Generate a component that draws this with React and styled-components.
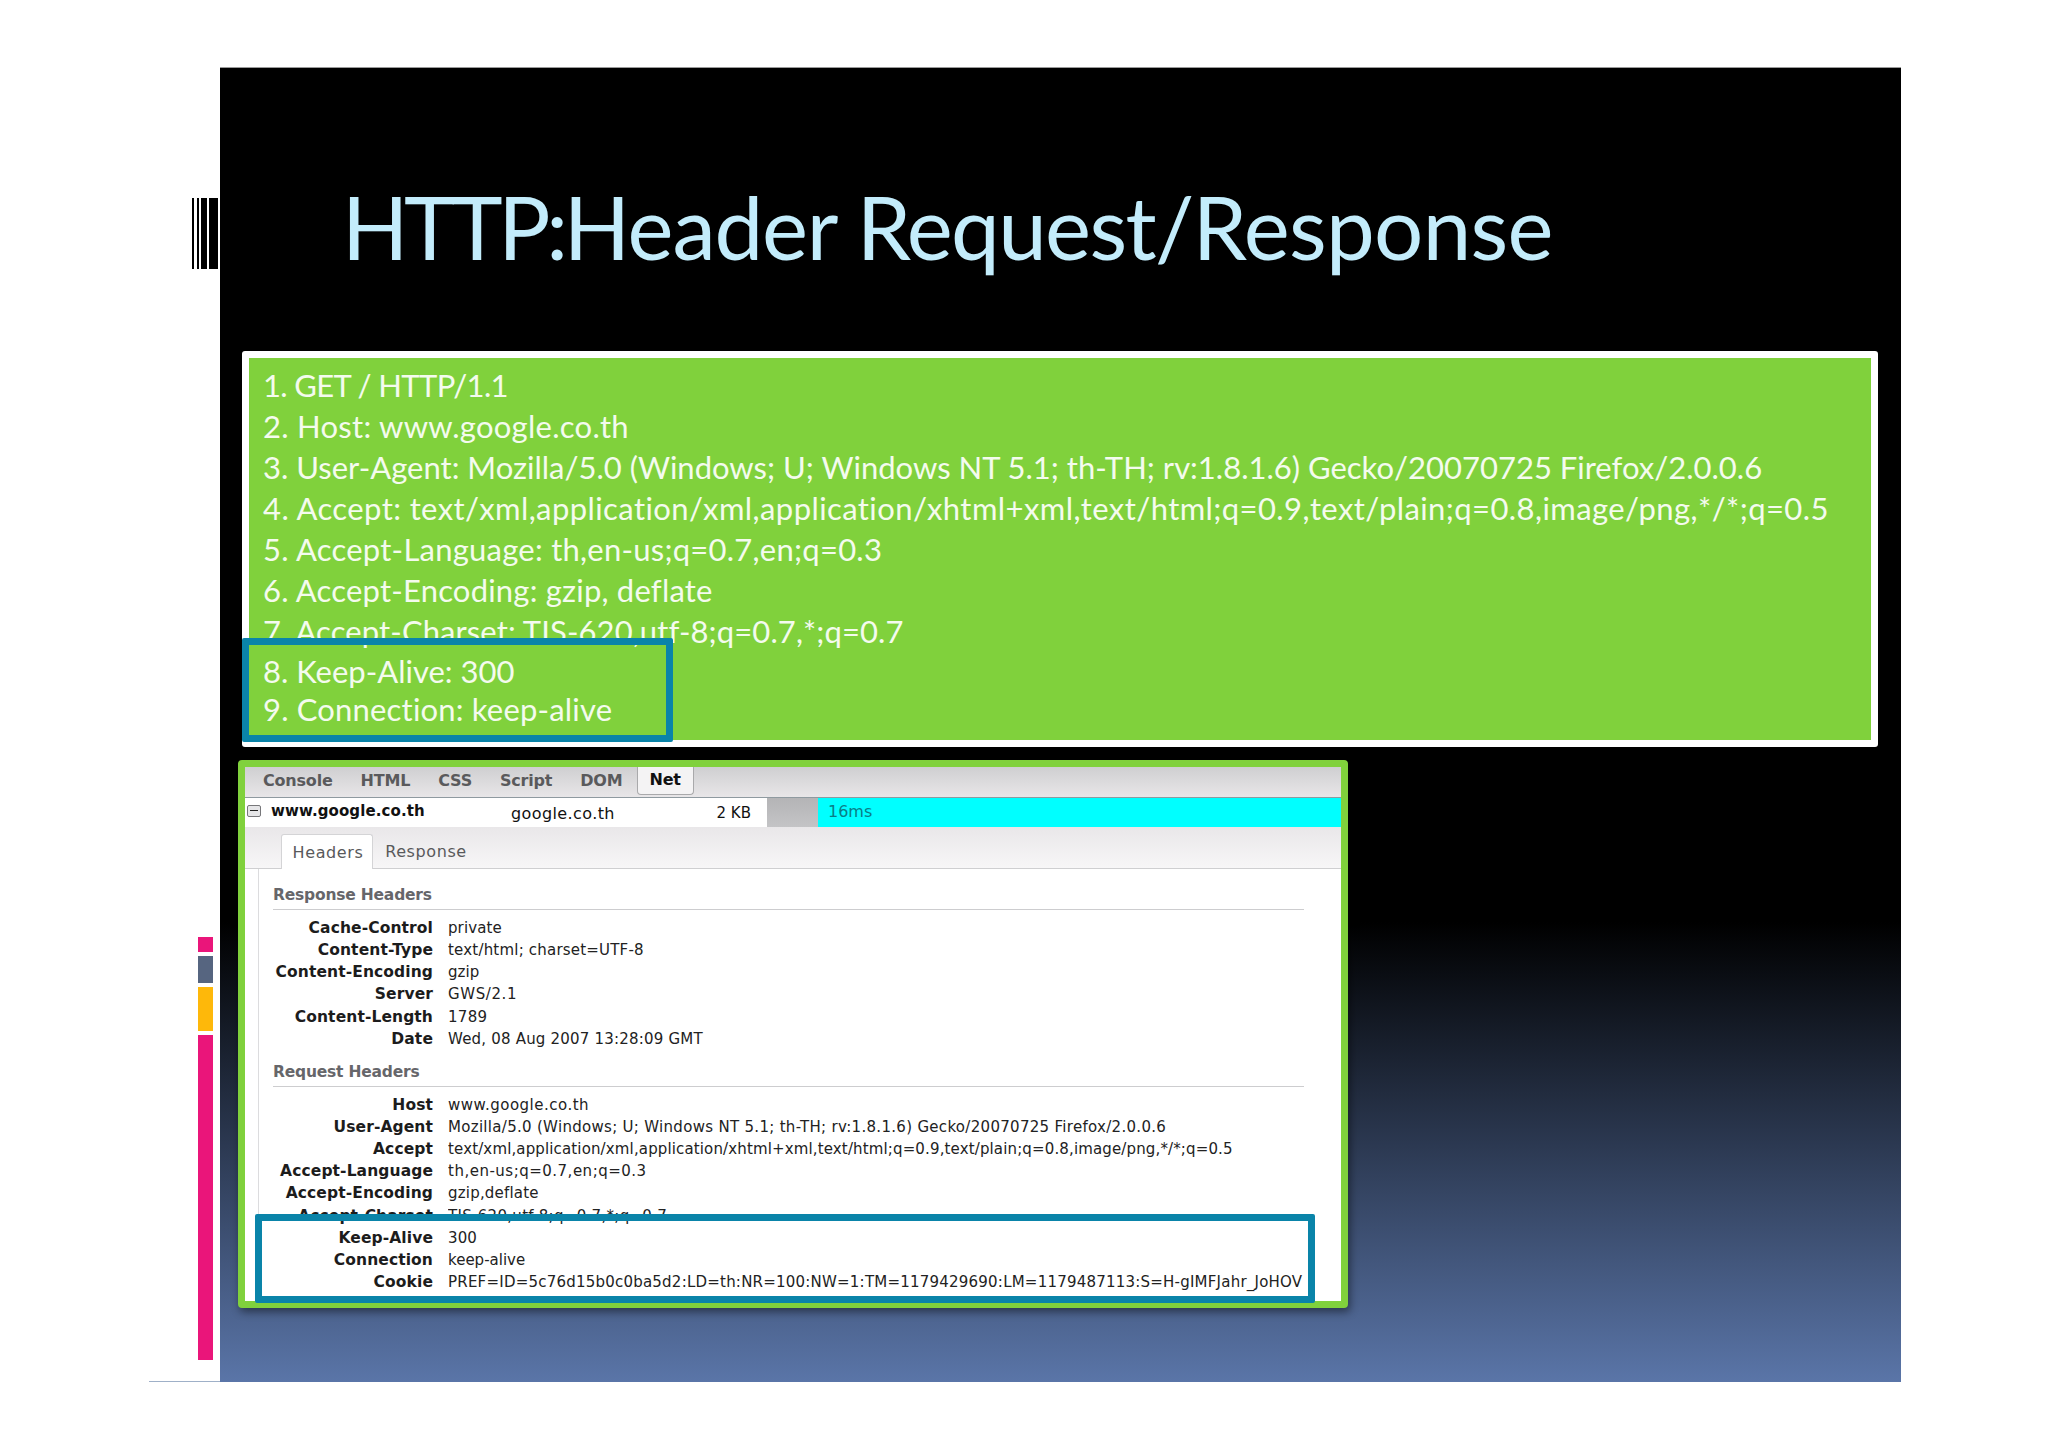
import React from "react"
import styled, { createGlobalStyle } from "styled-components"

const GlobalStyle = createGlobalStyle`
  html, body {
    margin: 0;
    padding: 0;
    background: #ffffff;
  }
`

const Page = styled.div`
  display: flex;
  width: 2048px;
  height: 1447px;
  padding-top: 67px;
  box-sizing: border-box;
  background: #ffffff;
  overflow: hidden;
`

const Rail = styled.div`
  display: flex;
  flex-direction: column;
  align-items: flex-end;
  width: 220px;
  height: 1315px;
`

const Barcode = styled.svg`
  display: block;
  width: 27px;
  height: 71px;
  margin-top: 131px;
  margin-right: 1px;
`

const Bars = styled.div`
  display: flex;
  flex-direction: column;
  gap: 4px;
  width: 15px;
  margin-top: 668px;
  margin-right: 7px;
`

const Bar = styled.div`
  height: ${p => p.$h}px;
  background: ${p => p.$color};
`

const FootLine = styled.div`
  width: 71px;
  height: 1px;
  margin-top: auto;
  background: #9fb0c8;
`

const Slide = styled.div`
  width: 1681px;
  height: 1315px;
  background: linear-gradient(180deg, #000000 0%, #000000 65%, #5a75a8 100%);
  border-top: 1px solid #9a9a9a;
  box-sizing: border-box;
`

const TitleBar = styled.div`
  display: flex;
  align-items: flex-start;
  height: 283px;
  padding-left: 122px;
  box-sizing: border-box;
`

const Title = styled.h1`
  margin: 107px 0 0;
  font-family: Lato, sans-serif;
  font-weight: 400;
  font-size: 87px;
  line-height: 104px;
  color: #c3ecfb;
  white-space: nowrap;
`

const TitlePart = styled.span`
  letter-spacing: ${p => p.$track}px;
`

const GreenPanel = styled.div`
  position: relative;
  width: 1636px;
  height: 396px;
  margin-left: 22px;
  padding: 7px 14px 0;
  box-sizing: border-box;
  background: #80d13c;
  border: 7px solid #ffffff;
  border-radius: 3px;
`

const PlainLine = styled.div`
  height: ${p => (p.$tight ? 38 : 41)}px;
  font-family: Lato, sans-serif;
  font-size: 31px;
  line-height: ${p => (p.$tight ? 38 : 41)}px;
  letter-spacing: ${p => p.$track}px;
  color: #f4fbee;
  white-space: nowrap;
`

const HighlightBox = styled.div`
  position: absolute;
  box-sizing: border-box;
  border: 7px solid #0a84a9;
  border-radius: 2px;
  pointer-events: none;
`

const PlainBox = styled(HighlightBox)`
  left: -7px;
  bottom: -2px;
  width: 431px;
  height: 104px;
`

const LogBox = styled(HighlightBox)`
  left: 10px;
  bottom: -2px;
  width: 1060px;
  height: 89px;
`

const FirePanel = styled.div`
  position: relative;
  display: flex;
  flex-direction: column;
  width: 1110px;
  height: 548px;
  margin: 13px 0 0 18px;
  box-sizing: border-box;
  background: #ffffff;
  border: 7px solid #80d13c;
  border-radius: 4px;
  box-shadow: 2px 4px 8px rgba(0, 0, 0, 0.45);
  font-family: "DejaVu Sans", sans-serif;
`

const Toolbar = styled.div`
  display: flex;
  align-items: flex-start;
  gap: 28px;
  height: 31px;
  padding-left: 18px;
  box-sizing: border-box;
  background: linear-gradient(180deg, #cfcfd1 0%, #e8e6e8 100%);
  border-bottom: 1px solid #8f9aa0;
`

const ToolTab = styled.div`
  display: flex;
  align-items: center;
  height: ${p => (p.$active ? 28 : 29)}px;
  padding-bottom: 2px;
  box-sizing: border-box;
  font-size: 16px;
  font-weight: 700;
  letter-spacing: -0.2px;
  color: ${p => (p.$active ? "#111111" : "#5a5a5c")};
  ${p => p.$active && `
    margin-left: -14px;
    padding: 0 12px 2px;
    background: #f4f3f4;
    border: 1px solid #a9a9ab;
    border-top: none;
    border-radius: 0 0 4px 4px;
  `}
`

const RequestRow = styled.div`
  display: flex;
  align-items: center;
  height: 29px;
  color: #111111;
  background: #ffffff;
`

const Expander = styled.div`
  display: flex;
  align-items: center;
  justify-content: center;
  width: 14px;
  height: 12px;
  margin: -4px 0 0 2px;
  box-sizing: border-box;
  background: #e6e6e8;
  border: 1px solid #77777a;
  border-radius: 2px;

  &::after {
    content: "";
    width: 8px;
    height: 1px;
    background: #222222;
  }
`

const Host = styled.div`
  width: 240px;
  margin: -4px 0 0 10px;
  font-size: 15px;
  font-weight: 700;
  letter-spacing: 0.1px;
`

const Domain = styled.div`
  width: 192px;
  font-size: 16px;
  letter-spacing: 0.4px;
  margin-top: 2px;
`

const Size = styled.div`
  width: 64px;
  padding-right: 16px;
  box-sizing: border-box;
  text-align: right;
  font-size: 15px;
`

const WaitBar = styled.div`
  width: 51px;
  height: 100%;
  background: linear-gradient(180deg, #b4b4b6 0%, #c4c4c6 100%);
`

const TimeBar = styled.div`
  flex: 1;
  height: 100%;
  padding-left: 10px;
  box-sizing: border-box;
  background: #00ffff;
  color: #0a7d86;
  font-size: 16px;
  line-height: 28px;
`

const SubTabs = styled.div`
  display: flex;
  align-items: flex-end;
  height: 42px;
  padding-left: 36px;
  box-sizing: border-box;
  background: linear-gradient(180deg, #e9e7e9 0%, #f7f6f7 100%);
  border-bottom: 1px solid #cfcfd1;
`

const SubTab = styled.div`
  display: flex;
  align-items: center;
  justify-content: center;
  height: 35px;
  width: ${p => p.$w}px;
  margin-bottom: -1px;
  padding-left: 2px;
  box-sizing: border-box;
  font-size: 16px;
  letter-spacing: 0.6px;
  color: #59595b;
  ${p => p.$active && `
    background: #ffffff;
    border: 1px solid #d4d4d6;
    border-bottom: none;
    border-radius: 3px 3px 0 0;
  `}
`

const Details = styled.div`
  flex: 1;
  margin-left: 13px;
  padding: 15px 37px 0 14px;
  border-left: 1px solid #dcdcde;
  overflow: hidden;
`

const SectionTitle = styled.div`
  height: 25px;
  margin-top: ${p => p.$gap || 0}px;
  border-bottom: 1px solid #cdcdcf;
  font-size: 15.5px;
  font-weight: 700;
  line-height: 22px;
  letter-spacing: -0.2px;
  color: #66666a;
`

const HeaderList = styled.div`
  margin-top: 7px;
`

const HeaderRow = styled.div`
  display: flex;
  height: 22.15px;
  line-height: 22px;
  white-space: nowrap;
`

const HeaderName = styled.div`
  flex: none;
  width: 160px;
  text-align: right;
  font-size: 15.5px;
  font-weight: 700;
  letter-spacing: 0.1px;
  color: #1c1c1c;
`

const HeaderValue = styled.div`
  width: 857px;
  margin-left: 15px;
  overflow: hidden;
  font-size: 15px;
  letter-spacing: ${p => p.$track}px;
  color: #222222;
`

const TITLE_PARTS = [
  ["HTTP:", -4.3],
  ["Header ", -1.15],
  ["Request/", -1.6],
  ["Response", -0.7],
]

const PLAIN_LINES = [
  ["1. GET / HTTP/1.1", -0.64],
  ["2. Host: www.google.co.th", 0.27],
  ["3. User-Agent: Mozilla/5.0 (Windows; U; Windows NT 5.1; th-TH; rv:1.8.1.6) Gecko/20070725 Firefox/2.0.0.6", 0],
  ["4. Accept: text/xml,application/xml,application/xhtml+xml,text/html;q=0.9,text/plain;q=0.8,image/png,*/*;q=0.5", 0.41],
  ["5. Accept-Language: th,en-us;q=0.7,en;q=0.3", 0.24],
  ["6. Accept-Encoding: gzip, deflate", 0.2],
  ["7. Accept-Charset: TIS-620,utf-8;q=0.7,*;q=0.7", 0.09],
]

const RESPONSE_HEADERS = [
  ["Cache-Control", "private", 0.1],
  ["Content-Type", "text/html; charset=UTF-8", 0.2],
  ["Content-Encoding", "gzip", 0.1],
  ["Server", "GWS/2.1", 0.6],
  ["Content-Length", "1789", 0.3],
  ["Date", "Wed, 08 Aug 2007 13:28:09 GMT", 0.2],
]

const REQUEST_HEADERS = [
  ["Host", "www.google.co.th", 0.5],
  ["User-Agent", "Mozilla/5.0 (Windows; U; Windows NT 5.1; th-TH; rv:1.8.1.6) Gecko/20070725 Firefox/2.0.0.6", 0.3],
  ["Accept", "text/xml,application/xml,application/xhtml+xml,text/html;q=0.9,text/plain;q=0.8,image/png,*/*;q=0.5", 0.14],
  ["Accept-Language", "th,en-us;q=0.7,en;q=0.3", 0.5],
  ["Accept-Encoding", "gzip,deflate", 0.2],
  ["Accept-Charset", "TIS-620,utf-8;q=0.7,*;q=0.7", 0.3],
  ["Keep-Alive", "300", 0.1],
  ["Connection", "keep-alive", 0],
  ["Cookie", "PREF=ID=5c76d15b0c0ba5d2:LD=th:NR=100:NW=1:TM=1179429690:LM=1179487113:S=H-gIMFJahr_JoHOV", 0.22],
]

const STRIPES = [
  [0, 2], [5, 2], [9, 6], [17, 9],
]

const Rows = ({ items }) => (
  <HeaderList>
    {items.map(([name, value, track]) => (
      <HeaderRow key={name}>
        <HeaderName>{name}</HeaderName>
        <HeaderValue $track={track}>{value}</HeaderValue>
      </HeaderRow>
    ))}
  </HeaderList>
)

const App = () => {
  return (
    <Page>
      <GlobalStyle />
      <Rail>
        <Barcode viewBox="0 0 27 71">
          {STRIPES.map(([x, w]) => (
            <rect key={x} x={x} y="0" width={w} height="71" fill="#000000" />
          ))}
        </Barcode>
        <Bars>
          <Bar $h={15} $color="#ea157a" />
          <Bar $h={27} $color="#566580" />
          <Bar $h={44} $color="#feb80a" />
          <Bar $h={325} $color="#ea157a" />
        </Bars>
        <FootLine />
      </Rail>
      <Slide>
        <TitleBar>
          <Title>
            {TITLE_PARTS.map(([part, track]) => (
              <TitlePart key={part} $track={track}>{part}</TitlePart>
            ))}
          </Title>
        </TitleBar>
        <GreenPanel>
          {PLAIN_LINES.map(([line, track]) => (
            <PlainLine key={line} $track={track}>{line}</PlainLine>
          ))}
          <PlainLine $tight $track={0}>8. Keep-Alive: 300</PlainLine>
          <PlainLine $tight $track={0.18}>9. Connection: keep-alive</PlainLine>
          <PlainBox />
        </GreenPanel>
        <FirePanel>
          <Toolbar>
            <ToolTab>Console</ToolTab>
            <ToolTab>HTML</ToolTab>
            <ToolTab>CSS</ToolTab>
            <ToolTab>Script</ToolTab>
            <ToolTab>DOM</ToolTab>
            <ToolTab $active>Net</ToolTab>
          </Toolbar>
          <RequestRow>
            <Expander />
            <Host>www.google.co.th</Host>
            <Domain>google.co.th</Domain>
            <Size>2 KB</Size>
            <WaitBar />
            <TimeBar>16ms</TimeBar>
          </RequestRow>
          <SubTabs>
            <SubTab $w={92} $active>Headers</SubTab>
            <SubTab $w={104}>Response</SubTab>
          </SubTabs>
          <Details>
            <SectionTitle>Response Headers</SectionTitle>
            <Rows items={RESPONSE_HEADERS} />
            <SectionTitle $gap={11}>Request Headers</SectionTitle>
            <Rows items={REQUEST_HEADERS} />
          </Details>
          <LogBox />
        </FirePanel>
      </Slide>
    </Page>
  )
}

export default App
